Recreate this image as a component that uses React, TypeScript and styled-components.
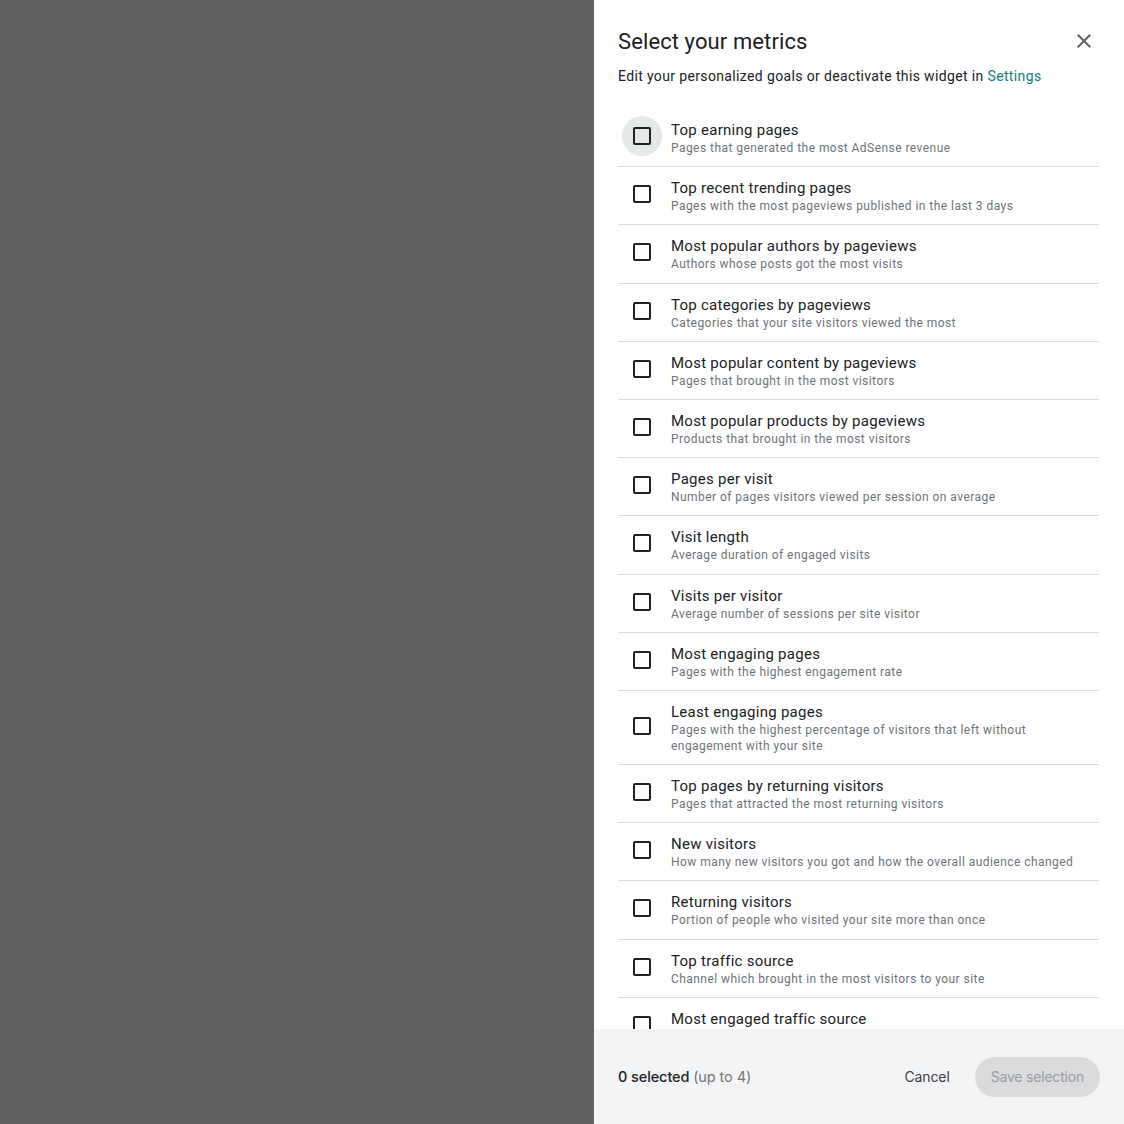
import React from "react";
import styled, { createGlobalStyle } from "styled-components";

const GlobalStyle = createGlobalStyle`
  html, body { margin: 0; padding: 0; height: 100%; overflow: hidden; }
  body { font-family: Roboto, "Noto Sans", Arial, sans-serif; color: #202124; }
  #root { height: 100%; }
`;

const Page = styled.div`
  display: grid;
  grid-template-columns: 1fr 530px;
  height: 1124px;
  width: 1124px;
`;

const Overlay = styled.div`
  background: #616161;
`;

const Panel = styled.aside`
  background: #ffffff;
  display: flex;
  flex-direction: column;
  height: 1124px;
  overflow: hidden;
`;

const Header = styled.div`
  display: flex;
  align-items: center;
  justify-content: space-between;
  padding: 19px 20px 0 24px;
`;

const Title = styled.h2`
  margin: 0;
  font-size: 22px;
  font-weight: 400;
  line-height: 40px;
  padding-top: 3px;
  letter-spacing: 0.1px;
  color: #202124;
`;

const CloseButton = styled.button`
  width: 40px;
  height: 40px;
  border: none;
  background: transparent;
  padding: 0;
  display: flex;
  align-items: center;
  justify-content: center;
  color: #5f6368;
  cursor: pointer;
`;

const Subtitle = styled.p`
  margin: 4px 0 0;
  padding: 0 24px;
  font-size: 14px;
  line-height: 20px;
  letter-spacing: 0.36px;
  color: #202124;
`;

const Link = styled.a`
  color: #108080;
  text-decoration: none;
`;

const List = styled.div`
  flex: 1;
  overflow: hidden;
  padding: 23px 25px 0 24px;
`;

const Row = styled.label`
  display: flex;
  align-items: center;
  padding: 11px 0 10.2px;
  border-bottom: 1px solid #dadce0;
  cursor: pointer;
`;

const CheckWrap = styled.span<{ $hover?: boolean }>`
  width: 40px;
  height: 40px;
  margin: -14px 9px -10px 4px;
  flex-shrink: 0;
  border-radius: 50%;
  background: ${(p) => (p.$hover ? "#e4e8e6" : "transparent")};
  display: flex;
  align-items: center;
  justify-content: center;
`;

const Box = styled.span`
  width: 18px;
  height: 18px;
  box-sizing: border-box;
  border: 2px solid #202124;
  border-radius: 2px;
`;

const Texts = styled.span`
  display: flex;
  flex-direction: column;
  min-width: 0;
`;

const ItemTitle = styled.span`
  font-size: 15px;
  line-height: 20px;
  letter-spacing: 0.27px;
  color: #202124;
`;

const ItemDesc = styled.span`
  font-size: 12px;
  line-height: 16px;
  letter-spacing: 0.45px;
  color: #6f7378;
  padding-right: 16px;
`;

const Footer = styled.div`
  height: 95px;
  flex-shrink: 0;
  background: #f3f4f6;
  display: flex;
  align-items: center;
  padding: 0 24px;
`;

const Count = styled.span`
  font-family: Inter, Roboto, Arial, sans-serif;
  font-size: 14.5px;
  font-weight: 500;
  color: #202124;
  flex: 1;
  letter-spacing: -0.1px;
`;

const Muted = styled.span`
  font-weight: 400;
  color: #757575;
`;

const TextButton = styled.button`
  border: none;
  background: transparent;
  font-family: Inter, Roboto, Arial, sans-serif;
  font-size: 14px;
  color: #3c4043;
  padding: 0 12px;
  height: 40px;
  margin-right: 13px;
  letter-spacing: -0.1px;
`;

const PrimaryButton = styled.button`
  border: none;
  height: 40px;
  border-radius: 20px;
  padding: 0 16px;
  background: #dadbdd;
  color: #9a9da1;
  font-family: Inter, Roboto, Arial, sans-serif;
  font-size: 14px;
  letter-spacing: -0.2px;
`;

const metrics: { title: string; desc: string }[] = [
  { title: "Top earning pages", desc: "Pages that generated the most AdSense revenue" },
  { title: "Top recent trending pages", desc: "Pages with the most pageviews published in the last 3 days" },
  { title: "Most popular authors by pageviews", desc: "Authors whose posts got the most visits" },
  { title: "Top categories by pageviews", desc: "Categories that your site visitors viewed the most" },
  { title: "Most popular content by pageviews", desc: "Pages that brought in the most visitors" },
  { title: "Most popular products by pageviews", desc: "Products that brought in the most visitors" },
  { title: "Pages per visit", desc: "Number of pages visitors viewed per session on average" },
  { title: "Visit length", desc: "Average duration of engaged visits" },
  { title: "Visits per visitor", desc: "Average number of sessions per site visitor" },
  { title: "Most engaging pages", desc: "Pages with the highest engagement rate" },
  { title: "Least engaging pages", desc: "Pages with the highest percentage of visitors that left without engagement with your site" },
  { title: "Top pages by returning visitors", desc: "Pages that attracted the most returning visitors" },
  { title: "New visitors", desc: "How many new visitors you got and how the overall audience changed" },
  { title: "Returning visitors", desc: "Portion of people who visited your site more than once" },
  { title: "Top traffic source", desc: "Channel which brought in the most visitors to your site" },
  { title: "Most engaged traffic source", desc: "Visitors coming via this channel spent the most time on your site" },
  { title: "Top traffic source driving add to cart", desc: "Channel which brought in the most add to cart events to your site" },
];

export default function App() {
  return (
    <>
      <GlobalStyle />
      <Page>
        <Overlay />
        <Panel>
          <Header>
            <Title>Select your metrics</Title>
            <CloseButton aria-label="Close">
              <svg width="24" height="24" viewBox="0 0 24 24" fill="currentColor">
                <path d="M19 6.41L17.59 5 12 10.59 6.41 5 5 6.41 10.59 12 5 17.59 6.41 19 12 13.41 17.59 19 19 17.59 13.41 12z" />
              </svg>
            </CloseButton>
          </Header>
          <Subtitle>
            Edit your personalized goals or deactivate this widget in <Link href="#">Settings</Link>
          </Subtitle>
          <List>
            {metrics.map((m, i) => (
              <Row key={m.title}>
                <CheckWrap $hover={i === 0}>
                  <Box />
                </CheckWrap>
                <Texts>
                  <ItemTitle>{m.title}</ItemTitle>
                  <ItemDesc>{m.desc}</ItemDesc>
                </Texts>
              </Row>
            ))}
          </List>
          <Footer>
            <Count>
              0 selected <Muted>(up to 4)</Muted>
            </Count>
            <TextButton>Cancel</TextButton>
            <PrimaryButton>Save selection</PrimaryButton>
          </Footer>
        </Panel>
      </Page>
    </>
  );
}
